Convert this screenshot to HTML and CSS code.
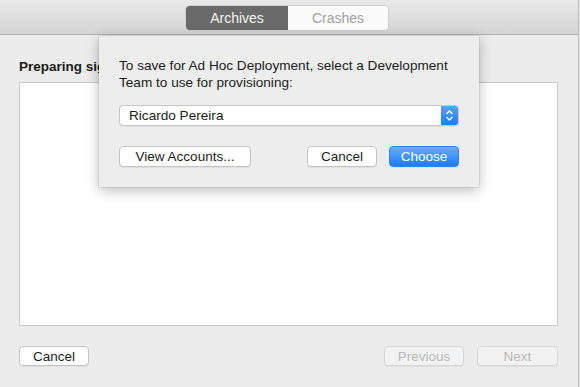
FILE: index.html
```html
<!DOCTYPE html>
<html lang="en">
<head>
    <meta charset="UTF-8">
    <title>Archives</title>
    <link rel="stylesheet" href="styles.css">
</head>
<body>
    <div class="window">
        <div class="toolbar">
            <div class="segmented">
                <span class="segment active">Archives</span>
                <span class="segment">Crashes</span>
            </div>
        </div>

        <div class="content">
            <h1>Preparing signing assets</h1>
            <div class="log"></div>
            <div class="footer">
                <button class="btn btn-cancel">Cancel</button>
                <div class="nav">
                    <button class="btn btn-disabled btn-prev">Previous</button>
                    <button class="btn btn-disabled btn-next">Next</button>
                </div>
            </div>
        </div>

        <!-- sheet -->
        <div class="sheet">
            <p>To save for Ad Hoc Deployment, select a Development Team to use for provisioning:</p>
            <div class="popup">
                <span>Ricardo Pereira</span>
                <span class="popup-arrows">
                    <svg width="9" height="13" viewBox="0 0 9 13">
                        <path d="M1.5 5 L4.5 2 L7.5 5 M1.5 8 L4.5 11 L7.5 8" fill="none" stroke="#fff" stroke-width="1.4"/>
                    </svg>
                </span>
            </div>
            <div class="sheet-actions">
                <button class="btn btn-accounts">View Accounts...</button>
                <div class="right">
                    <button class="btn btn-sheet-cancel">Cancel</button>
                    <button class="btn btn-primary">Choose</button>
                </div>
            </div>
        </div>
    </div>
</body>
</html>
```

FILE: styles.css
```css
html, body {
    margin: 0;
    padding: 0;
}
body {
    font-family: "Liberation Sans", Arial, sans-serif;
    font-size: 13px;
    color: #1c1c1c;
    background-color: #e4e4e4;
    width: 580px;
    height: 387px;
    overflow: hidden;
}
.window {
    position: relative;
    width: 578px;
    height: 387px;
    background-color: #ececec;
    border-right: 1px solid #bdbdbd;
}
.toolbar {
    height: 35px;
    border-bottom: 1px solid #b2b2b2;
    background: linear-gradient(#e9e9e9, #d4d4d4);
    display: flex;
    justify-content: center;
    padding-top: 6px;
    box-sizing: border-box;
}
.segmented {
    display: flex;
    height: 24px;
    margin-right: 4px;
    border-radius: 4px;
    box-shadow: 0 0 0 1px #cfcfcf, 0 1px 1px rgba(0,0,0,0.1);
    overflow: hidden;
}
.segment {
    width: 100px;
    line-height: 24px;
    text-align: center;
    font-size: 14px;
    background-color: #fbfbfb;
    color: #a0a0a0;
}
.segment.active {
    width: 102px;
    background-color: #6a6a6a;
    color: #f4f4f4;
}
.content {
    padding: 0 20px 0 19px;
}
h1 {
    font-size: 13.5px;
    font-weight: bold;
    margin: 24px 0 0 0;
    line-height: 16px;
    color: #1a1a1a;
    width: 80px;
    white-space: nowrap;
    overflow: hidden;
}
.log {
    margin-top: 7px;
    height: 242px;
    background-color: white;
    border: 1px solid #c9c9c9;
}
.footer {
    display: flex;
    justify-content: space-between;
    margin-top: 20px;
}
.nav {
    display: flex;
    gap: 13px;
}
.btn {
    font-family: inherit;
    font-size: 13.5px;
    height: 20px;
    padding: 0;
    border: 1px solid #c4c4c4;
    border-radius: 4px;
    background-color: white;
    color: #1c1c1c;
    box-shadow: 0 1px 0 rgba(0,0,0,0.05);
}
.btn-cancel {
    width: 70px;
}
.btn-disabled {
    background-color: #f2f2f2;
    color: #b8b8b8;
    border-color: #d6d6d6;
}
.btn-prev {
    width: 80px;
}
.btn-next {
    width: 81px;
}
.sheet {
    position: absolute;
    top: 36px;
    left: 99px;
    width: 380px;
    height: 151px;
    box-sizing: border-box;
    padding: 21px 20px 0 20px;
    background-color: #ededed;
    box-shadow: 0 3px 12px rgba(0,0,0,0.28), 0 0 0 1px rgba(0,0,0,0.06);
}
.sheet p {
    margin: 0;
    line-height: 17px;
    font-size: 13.6px;
    color: #1c1c1c;
}
.popup {
    margin-top: 14px;
    height: 21px;
    box-sizing: border-box;
    display: flex;
    justify-content: space-between;
    align-items: center;
    font-size: 13.6px;
    background-color: white;
    border: 1px solid #c6c6c6;
    border-radius: 4px;
    overflow: hidden;
    box-shadow: 0 1px 0 rgba(0,0,0,0.05);
}
.popup span {
    padding-left: 9px;
}
.popup .popup-arrows {
    padding: 0;
    width: 17px;
    height: 21px;
    display: flex;
    align-items: center;
    justify-content: center;
    background: linear-gradient(#5ca4fd, #1a78f6);
}
.sheet-actions {
    display: flex;
    justify-content: space-between;
    margin-top: 20px;
}
.sheet-actions .right {
    display: flex;
    gap: 12px;
}
.sheet-actions .btn {
    height: 21px;
}
.btn-accounts {
    width: 132px;
}
.btn-sheet-cancel {
    width: 70px;
}
.btn-primary {
    width: 70px;
    color: white;
    border-color: #2f86f6;
    background: linear-gradient(#69adfd, #1c7bf7);
}
```
